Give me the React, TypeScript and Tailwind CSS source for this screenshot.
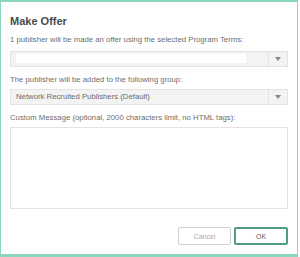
function SelectBox({ children }: { children?: React.ReactNode }) {
  return (
    <div className="flex h-[16px] items-stretch border border-[#e3e3e3] bg-[#f3f3f3]">
      <div className="flex flex-1 items-center px-[5px] text-[#6a6a6a]">{children}</div>
      <div className="flex w-[19px] items-center justify-center border-l border-[#e3e3e3]">
        <span className="block h-0 w-0 border-x-[3px] border-t-[4px] border-x-transparent border-t-[#888]" />
      </div>
    </div>
  );
}

export default function App() {
  return (
    <div className="h-[257px] w-[300px] bg-white pr-[2px] font-['Liberation_Sans',Arial,sans-serif] text-[7.75px] leading-none text-[#6e6e6e]">
      <div className="flex h-full flex-col border-x border-b-[3px] border-t-2 border-[#8fd6bf] bg-white px-[9px]">
        <h1 className="mt-[14px] text-[11px] font-bold text-[#4a4a4a]">Make Offer</h1>
        <p className="mt-[9px]">1 publisher will be made an offer using the selected Program Terms:</p>
        <div className="mt-[7px]">
          <SelectBox>
            <div className="h-[9px] w-[230px] bg-white" />
          </SelectBox>
        </div>
        <p className="mt-[9px]">The publisher will be added to the following group:</p>
        <div className="mt-[5px]">
          <SelectBox>Network Recruited Publishers (Default)</SelectBox>
        </div>
        <p className="mt-[9px]">Custom Message (optional, 2000 characters limit, no HTML tags):</p>
        <textarea className="mt-[6px] h-[82px] w-full resize-none border border-[#e3e3e3] bg-white outline-none" />
        <div className="mt-[18px] flex justify-end gap-[3px]">
          <button className="h-[18px] w-[53px] rounded-[2px] border border-[#cfcfcf] bg-white text-[7px] text-[#aaa]">
            Cancel
          </button>
          <button className="h-[18px] w-[54px] rounded-[2px] border-2 border-[#4f9c84] bg-white text-[7px] text-[#666]">
            OK
          </button>
        </div>
      </div>
    </div>
  );
}
